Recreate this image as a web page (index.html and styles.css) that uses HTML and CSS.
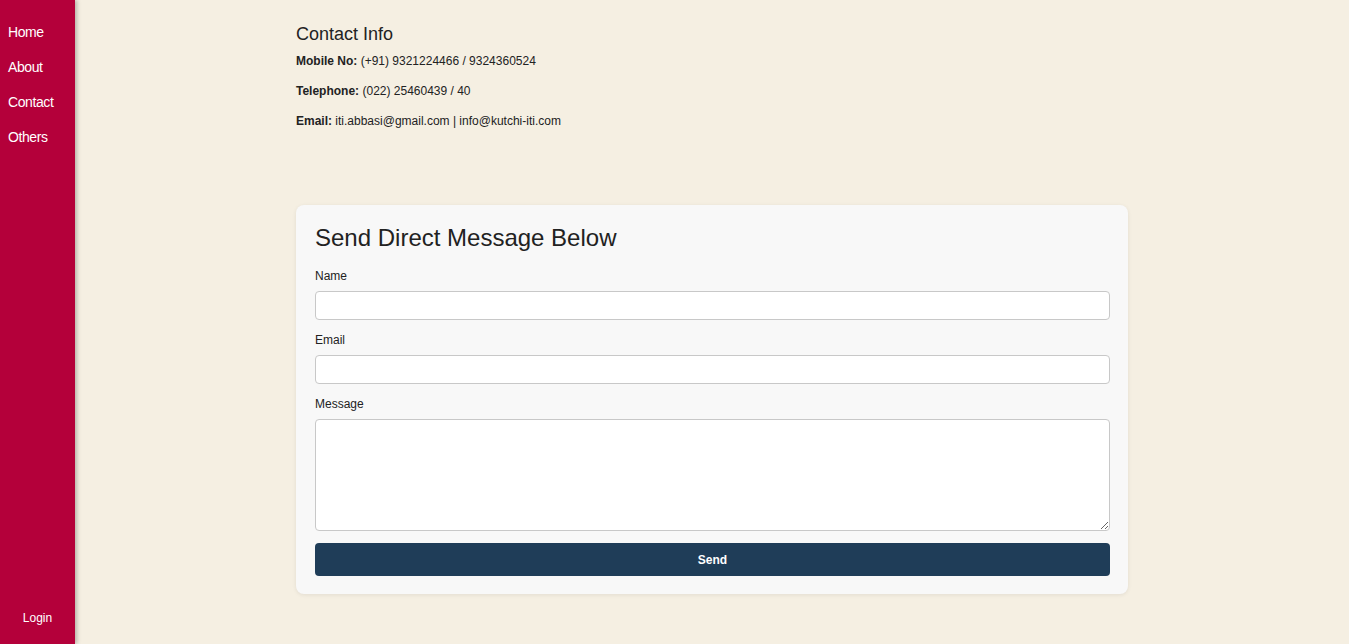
FILE: index.html
```html
<!DOCTYPE html>
<html>
<head>
<meta charset="utf-8">
<link rel="stylesheet" href="styles.css">
</head>
<body>
<div class="layout">
  <nav class="sidebar">
    <div class="nav-links">
      <a href="#">Home</a>
      <a href="#">About</a>
      <a href="#">Contact</a>
      <a href="#">Others</a>
    </div>
    <a class="login" href="#">Login</a>
  </nav>
  <main class="main">
    <div class="container">
      <section class="info">
        <h3>Contact Info</h3>
        <p><b>Mobile No:</b> (+91) 9321224466 / 9324360524</p>
        <p><b>Telephone:</b> (022) 25460439 / 40</p>
        <p><b>Email:</b> iti.abbasi@gmail.com | info@kutchi-iti.com</p>
      </section>
      <form class="card">
        <h2>Send Direct Message Below</h2>
        <label>Name</label>
        <input type="text" class="field">
        <label>Email</label>
        <input type="email" class="field">
        <label>Message</label>
        <textarea class="field area"></textarea>
        <button type="button" class="send">Send</button>
      </form>
    </div>
  </main>
</div>
</body>
</html>
```

FILE: styles.css
```css
* { box-sizing: border-box; }
html, body { margin: 0; padding: 0; height: 100%; }
body {
  font-family: "Liberation Sans", Arial, sans-serif;
  background: #f5efe2;
  color: #222;
}
.layout { display: flex; min-height: 100vh; }
.sidebar {
  width: 75px;
  flex: none;
  background: #b4003a;
  box-shadow: 2px 0 4px rgba(0,0,0,0.25);
  display: flex;
  flex-direction: column;
  justify-content: space-between;
  padding: 15px 0 19px;
  position: relative;
  z-index: 1;
}
.nav-links { display: flex; flex-direction: column; }
.nav-links a {
  color: #fff;
  text-decoration: none;
  font-size: 14px;
  line-height: 19px;
  padding: 8px 8px;
  letter-spacing: -0.4px;
}
.login {
  color: #fff;
  text-decoration: none;
  font-size: 12px;
  line-height: 14px;
  text-align: center;
}
.main { flex: 1; display: flex; justify-content: center; }
.container { width: 832px; padding-top: 23px; }
.info h3 {
  font-size: 18px;
  font-weight: normal;
  margin: 0 0 9px;
  line-height: 22px;
}
.info p {
  font-size: 12px;
  line-height: 14px;
  margin: 0 0 16px;
}
.info p:last-child { margin-bottom: 0; }
.card {
  margin-top: 77px;
  background: #f8f8f8;
  border-radius: 8px;
  box-shadow: 0 1px 4px rgba(0,0,0,0.08);
  padding: 19px 18px 18px 19px;
  display: flex;
  flex-direction: column;
}
.card h2 {
  font-size: 24px;
  font-weight: normal;
  line-height: 28px;
  margin: 0 0 17px;
}
.card label {
  font-size: 12px;
  line-height: 14px;
  margin-bottom: 8px;
}
.field {
  display: block;
  width: 100%;
  height: 29px;
  border: 1px solid #c8c8c8;
  border-radius: 4px;
  background: #fff;
  margin: 0 0 13px;
  font-family: inherit;
}
.area { height: 112px; margin-bottom: 12px; resize: vertical; }
.send {
  height: 33px;
  border: none;
  border-radius: 4px;
  background: #1f3d58;
  color: #fff;
  font-family: inherit;
  font-size: 12px;
  font-weight: 600;
}
```
